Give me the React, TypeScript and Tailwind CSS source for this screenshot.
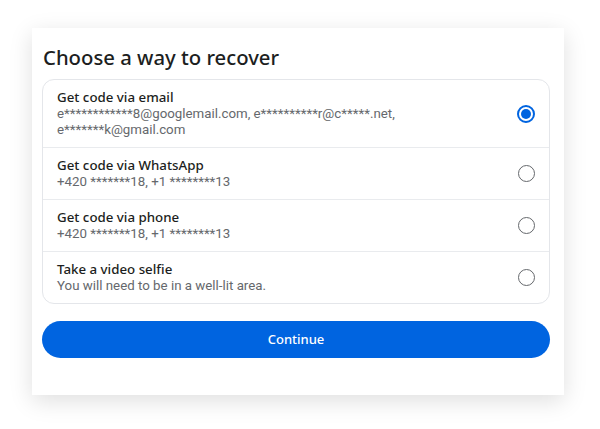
const OPTIONS = [
  {
    title: "Get code via email",
    lines: ["e************8@googlemail.com, e**********r@c*****.net,", "e*******k@gmail.com"],
    selected: true,
  },
  { title: "Get code via WhatsApp", lines: ["+420 *******18, +1 ********13"], selected: false },
  { title: "Get code via phone", lines: ["+420 *******18, +1 ********13"], selected: false },
  { title: "Take a video selfie", lines: ["You will need to be in a well-lit area."], selected: false },
];

function Radio({ checked }: { checked: boolean }) {
  if (checked) {
    return (
      <span className="w-[18px] h-[18px] rounded-full border-2 border-[#0064e0] flex items-center justify-center">
        <span className="w-[10px] h-[10px] rounded-full bg-[#0064e0]" />
      </span>
    );
  }
  return <span className="w-[17px] h-[17px] rounded-full border-[1.5px] border-[#65686c]" />;
}

export default function App() {
  return (
    <div className="w-[600px] h-[429px] bg-white pt-[28px] pl-[32px]" style={{ fontFamily: "Roboto, 'Liberation Sans', sans-serif" }}>
      <div className="w-[532px] h-[367px] bg-white shadow-[0_6px_22px_rgba(0,0,0,0.13)] px-[10px] pt-[14px]">
        <h1 className="text-[20.3px] leading-[30px] font-medium text-[#1c1e21] pl-[1px]" style={{ fontFamily: "'Noto Sans', sans-serif" }}>
          Choose a way to recover
        </h1>
        <div className="mt-[7px] w-[508px] rounded-[12px] border border-[#e4e6ea]">
          {OPTIONS.map((o, i) => (
            <div
              key={o.title}
              className={`flex items-center justify-between pl-[14px] pr-[14px] py-[9px] ${i > 0 ? "border-t border-[#e9ebee]" : ""}`}
            >
              <div>
                <p className="text-[13.3px] leading-[17px] font-medium text-[#1c1e21]" style={{ fontFamily: "'Noto Sans', sans-serif" }}>
                  {o.title}
                </p>
                {o.lines.map((l) => (
                  <p key={l} className="text-[13.3px] leading-[16px] text-[#65686c]">
                    {l}
                  </p>
                ))}
              </div>
              <Radio checked={o.selected} />
            </div>
          ))}
        </div>
        <button className="mt-[17px] w-[508px] h-[37px] rounded-full bg-[#0064e0] text-white text-[13px] font-medium" style={{ fontFamily: "'Noto Sans', sans-serif" }}>
          Continue
        </button>
      </div>
    </div>
  );
}
